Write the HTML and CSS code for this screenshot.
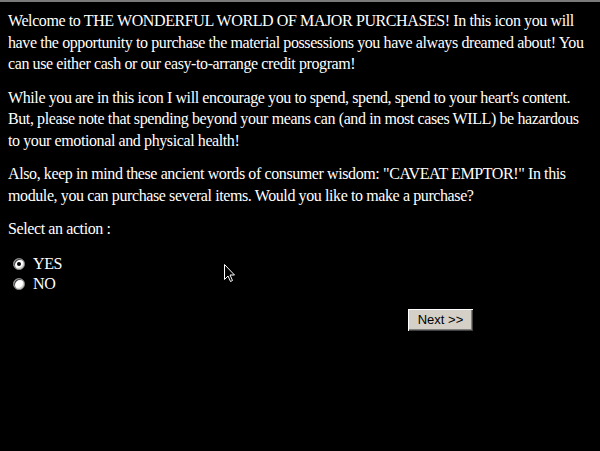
FILE: index.html
```html
<!DOCTYPE html>
<html>
<head>
<meta charset="utf-8">
<link rel="stylesheet" href="styles.css">
</head>
<body>
<div class="page">
  <p class="para">Welcome to THE WONDERFUL WORLD OF MAJOR PURCHASES! In this icon you will have the opportunity to purchase the material possessions you have always dreamed about! You can use either cash or our easy-to-arrange credit program!</p>
  <p class="para">While you are in this icon I will encourage you to spend, spend, spend to your heart's content. But, please note that spending beyond your means can (and in most cases WILL) be hazardous to your emotional and physical health!</p>
  <p class="para">Also, keep in mind these ancient words of consumer wisdom: "CAVEAT EMPTOR!" In this module, you can purchase several items. Would you like to make a purchase?</p>
  <p class="para">Select an action :</p>
  <div class="options">
    <label class="opt"><span class="radio checked"></span>YES</label>
    <label class="opt"><span class="radio"></span>NO</label>
  </div>
  <div class="actions">
    <button class="btn">Next &gt;&gt;</button>
  </div>
  <svg class="cursor" width="12" height="19" viewBox="0 0 12 19"><path d="M0.5 0.5 L0.5 15.5 L4 12 L6.5 17.5 L8.5 16.5 L6 11 L10.5 11 Z" fill="#000" stroke="#fff" stroke-width="1"/></svg>
</div>
</body>
</html>
```
FILE: styles.css
```css
html, body {
  margin: 0;
  padding: 0;
  background: #000;
}
body {
  border-top: 2px solid #7a7a7a;
  height: 449px;
  overflow: hidden;
}
.page {
  position: relative;
  padding: 8px 13px 0 8px;
  font-family: "Liberation Serif", "Times New Roman", serif;
  font-size: 16px;
  line-height: 21.5px;
  letter-spacing: -0.4px;
  color: #fff;
}
.para {
  margin: 0 0 12px 0;
}
.options {
  display: flex;
  flex-direction: column;
  padding-left: 5px;
  margin-top: 14px;
}
.opt {
  display: flex;
  align-items: center;
  gap: 8px;
  height: 20px;
}
.radio {
  width: 12px;
  height: 12px;
  border-radius: 50%;
  background: #fff;
  box-sizing: border-box;
  border: 1px solid #808080;
  box-shadow: inset 1px 1px 0 #404040, inset -1px -1px 0 #d4d0c8;
  position: relative;
}
.radio.checked::after {
  content: "";
  position: absolute;
  left: 3px;
  top: 3px;
  width: 4px;
  height: 4px;
  border-radius: 50%;
  background: #000;
}
.actions {
  display: flex;
  justify-content: flex-end;
  padding-right: 114px;
  margin-top: 15px;
}
.btn {
  width: 65px;
  height: 22px;
  background: #d4d0c8;
  border: none;
  box-shadow: inset 1px 1px 0 #fff, inset -1px -1px 0 #404040, inset -2px -2px 0 #808080;
  font-family: "Liberation Sans", Arial, sans-serif;
  font-size: 13px;
  letter-spacing: 0;
  color: #000;
  padding: 0;
}
.cursor {
  position: absolute;
  left: 224px;
  top: 262px;
}
```
